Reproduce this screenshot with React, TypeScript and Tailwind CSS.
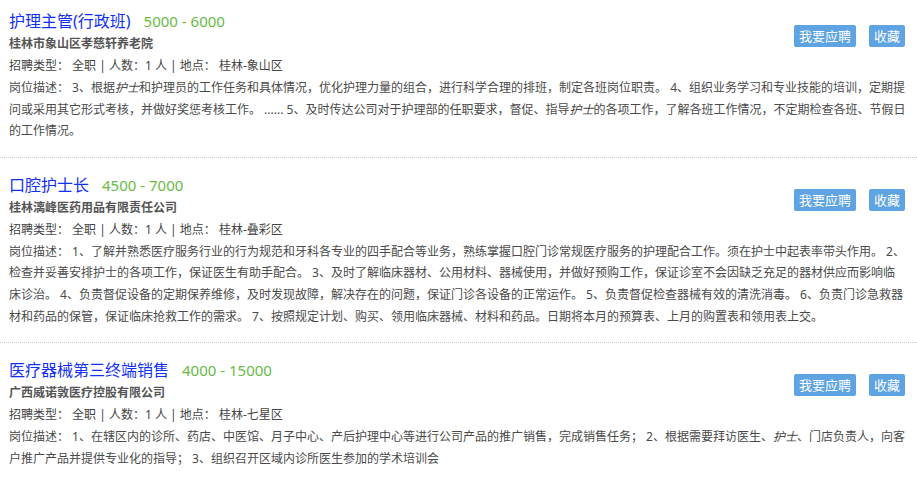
import type { ReactNode } from 'react';

interface Job {
  title: string;
  salary: string;
  company: string;
  area: string;
  desc: ReactNode;
}

const Hl = ({ children }: { children: ReactNode }) => <em className="italic">{children}</em>;

const jobs: Job[] = [
  {
    title: '护理主管(行政班)',
    salary: '5000 - 6000',
    company: '桂林市象山区孝慈轩养老院',
    area: '桂林-象山区',
    desc: (
      <>
        岗位描述： 3、根据<Hl>护士</Hl>和护理员的工作任务和具体情况，优化护理力量的组合，进行科学合理的排班，制定各班岗位职责。 4、组织业务学习和专业技能的培训，定期提问或采用其它形式考核，并做好奖惩考核工作。 ...... 5、及时传达公司对于护理部的任职要求，督促、指导<Hl>护士</Hl>的各项工作，了解各班工作情况，不定期检查各班、节假日的工作情况。
      </>
    ),
  },
  {
    title: '口腔护士长',
    salary: '4500 - 7000',
    company: '桂林漓峰医药用品有限责任公司',
    area: '桂林-叠彩区',
    desc: (
      <>
        岗位描述： 1、了解并熟悉医疗服务行业的行为规范和牙科各专业的四手配合等业务，熟练掌握口腔门诊常规医疗服务的护理配合工作。须在护士中起表率带头作用。 2、检查并妥善安排护士的各项工作，保证医生有助手配合。 3、及时了解临床器材、公用材料、器械使用，并做好预购工作，保证诊室不会因缺乏充足的器材供应而影响临床诊治。 4、负责督促设备的定期保养维修，及时发现故障，解决存在的问题，保证门诊各设备的正常运作。 5、负责督促检查器械有效的清洗消毒。 6、负责门诊急救器材和药品的保管，保证临床抢救工作的需求。 7、按照规定计划、购买、领用临床器械、材料和药品。日期将本月的预算表、上月的购置表和领用表上交。
      </>
    ),
  },
  {
    title: '医疗器械第三终端销售',
    salary: '4000 - 15000',
    company: '广西威诺敦医疗控股有限公司',
    area: '桂林-七星区',
    desc: (
      <>
        岗位描述： 1、在辖区内的诊所、药店、中医馆、月子中心、产后护理中心等进行公司产品的推广销售，完成销售任务； 2、根据需要拜访医生、<Hl>护士</Hl>、门店负责人，向客户推广产品并提供专业化的指导； 3、组织召开区域内诊所医生参加的学术培训会
      </>
    ),
  },
];

function JobItem({ job, first }: { job: Job; first: boolean }) {
  return (
    <div
      className={
        first
          ? 'px-[9px] pt-[9px] pb-[15px] border-b border-dotted border-[#c8c8c8]'
          : 'px-[9px] pt-[15px] pb-[15px] border-b border-dotted border-[#c8c8c8]'
      }
    >
      <div className="flex items-start justify-between">
        <div>
          {/* Title + salary */}
          <div className="flex items-baseline gap-[13px] h-6 leading-6">
            <span className="text-[16px] text-[#1230f5]">{job.title}</span>
            <span className="text-[15px] text-[#68ba45]">{job.salary}</span>
          </div>
          <p className="text-[12px] leading-[22px] font-bold text-[#555]">{job.company}</p>
          <p className="text-[12px] leading-[22px] text-[#444]">
            招聘类型： 全职 | 人数：1 人 | 地点： {job.area}
          </p>
        </div>
        <div className="flex gap-[13px] mt-4 mr-[3px]">
          <button className="h-[22px] px-[5px] rounded-[2px] bg-[#5ea4e2] text-white text-[13px] leading-[22px]">
            我要应聘
          </button>
          <button className="h-[22px] px-[5px] rounded-[2px] bg-[#5ea4e2] text-white text-[13px] leading-[22px]">
            收藏
          </button>
        </div>
      </div>
      <p className="w-[897px] text-[12px] leading-[21.6px] text-[#4a4a4a]">{job.desc}</p>
    </div>
  );
}

export default function App() {
  return (
    <div
      className="w-[917px] h-[480px] overflow-hidden bg-white"
      style={{ fontFamily: '"Noto Sans", "Noto Sans CJK SC", sans-serif' }}
    >
      {jobs.map((job, i) => (
        <JobItem key={job.title} job={job} first={i === 0} />
      ))}
    </div>
  );
}
